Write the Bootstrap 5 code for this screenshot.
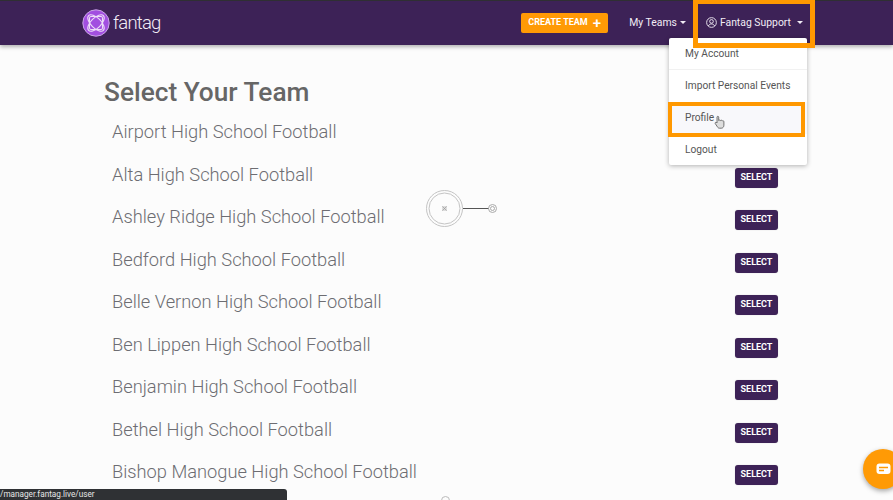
<!DOCTYPE html>
<html lang="en">
<head>
<meta charset="utf-8">
<title>Select Your Team</title>
<link href="https://cdn.jsdelivr.net/npm/bootstrap@5.3.0/dist/css/bootstrap.min.css" rel="stylesheet">
<style>
html,body{height:500px;overflow:hidden}
body{background:#fcfcfc;font-family:Roboto,"Liberation Sans",sans-serif;position:relative}
.topbar{height:45px;background:#3d2257;border-top:1px solid #2f2f33;box-shadow:0 2px 4px rgba(0,0,0,.3);padding:0 90px 0 82px;color:#fff}
.brandmark{font-size:18.5px;font-weight:300;color:#f1ecf5;gap:3px;letter-spacing:-.8px;line-height:1}
.btn-create{background:#ff9a05;border:0;color:#fff;font-size:9px;font-weight:700;height:20px;width:87px;padding:0;border-radius:2px;gap:5px}
.plus-mark{font-size:15px;line-height:1;font-weight:500}
.toplink{font-size:10.4px;color:#f1ecf5;gap:3px}
.gap-link{margin-left:21px;margin-right:20px}
.caret-down{border-top:3.5px solid #f1ecf5;border-left:3.5px solid transparent;border-right:3.5px solid transparent;display:inline-block}
.caret-spaced{margin-left:3px}
.teams-wrap{padding-left:104px;padding-top:32px;width:674px;box-sizing:content-box}
.page-title{font-size:26.25px;font-weight:500;color:#666;line-height:30px;margin:0 0 14px}
.team-row{height:42.5px;padding-left:8px}
.team-name{font-size:18.27px;font-weight:300;color:#6d6d72;line-height:24px;margin-top:-1px}
.btn-select{background:#3d2257;color:#fff;font-size:9px;font-weight:700;border:0;border-radius:3px;width:43px;height:20px;padding:0;margin-top:4px;box-shadow:0 0 1px rgba(0,0,0,.3)}
.menu-panel{position:absolute;left:669px;top:38px;width:138px;height:127px;background:#fff;border-radius:2px;box-shadow:0 1px 5px rgba(0,0,0,.3);font-size:10.2px;color:#555}
.menu-row{height:32px;padding-left:16px;display:flex;align-items:center}
.menu-row.first-row{border-bottom:1px solid #f1f1f1;height:31.5px;padding-top:1px}
.menu-row.active-row{background:#f8f8fb}
.hl-box{position:absolute;border:5px solid #ff9800}
.hl-account{left:693px;top:-1px;width:122px;height:49px}
.hl-profile{left:668px;top:102px;width:137px;height:35px;border-width:4px}
.cursor-hand{position:absolute;left:714px;top:115px}
.node-mark{position:absolute;left:426px;top:190px}
.node-stub{position:absolute;left:441px;top:496px;width:9px;height:9px;border:1px solid #bbb;border-radius:50%}
.status-tip{position:absolute;left:0;bottom:0;width:287px;height:11px;background:#2f3134;border-top-right-radius:3px;color:#e6e6e6;font-size:8.2px;line-height:11px;white-space:nowrap}
.chat-fab{position:absolute;left:863px;top:449px;width:40px;height:40px;border-radius:50%;background:#ff9a05;box-shadow:0 2px 5px rgba(0,0,0,.35);padding-left:13px}
</style>
</head>
<body>
<nav class="topbar d-flex align-items-center">
  <div class="brandmark d-flex align-items-center">
    <svg width="28" height="28" viewBox="0 0 28 28"><circle cx="14" cy="14" r="13.2" fill="#a24fe0" stroke="#c9a5e6" stroke-width="1"/><g fill="none" stroke="#ecdcf8" stroke-width="1.1"><ellipse cx="14" cy="14" rx="5" ry="10.5" transform="rotate(45 14 14)"/><ellipse cx="14" cy="14" rx="5" ry="10.5" transform="rotate(-45 14 14)"/><rect x="7.5" y="7.5" width="13" height="13" rx="1.5"/></g></svg>
    <span>fantag</span>
  </div>
  <div class="ms-auto d-flex align-items-center">
    <button class="btn-create d-flex align-items-center justify-content-center">CREATE TEAM <span class="plus-mark">+</span></button>
    <span class="toplink d-flex align-items-center gap-link">My Teams <span class="caret-down"></span></span>
    <span class="toplink d-flex align-items-center">
      <svg width="11" height="11" viewBox="0 0 12 12" fill="none" stroke="#f1ecf5" stroke-width="1"><circle cx="6" cy="6" r="5.3"/><circle cx="6" cy="4.8" r="2"/><path d="M2.6 9.8c.7-1.6 2-2.2 3.4-2.2s2.7.6 3.4 2.2"/></svg>
      Fantag Support <span class="caret-down caret-spaced"></span>
    </span>
  </div>
</nav>

<main class="teams-wrap">
  <h1 class="page-title">Select Your Team</h1>
  <div class="team-row d-flex justify-content-between"><span class="team-name">Airport High School Football</span><button class="btn-select">SELECT</button></div>
  <div class="team-row d-flex justify-content-between"><span class="team-name">Alta High School Football</span><button class="btn-select">SELECT</button></div>
  <div class="team-row d-flex justify-content-between"><span class="team-name">Ashley Ridge High School Football</span><button class="btn-select">SELECT</button></div>
  <div class="team-row d-flex justify-content-between"><span class="team-name">Bedford High School Football</span><button class="btn-select">SELECT</button></div>
  <div class="team-row d-flex justify-content-between"><span class="team-name">Belle Vernon High School Football</span><button class="btn-select">SELECT</button></div>
  <div class="team-row d-flex justify-content-between"><span class="team-name">Ben Lippen High School Football</span><button class="btn-select">SELECT</button></div>
  <div class="team-row d-flex justify-content-between"><span class="team-name">Benjamin High School Football</span><button class="btn-select">SELECT</button></div>
  <div class="team-row d-flex justify-content-between"><span class="team-name">Bethel High School Football</span><button class="btn-select">SELECT</button></div>
  <div class="team-row d-flex justify-content-between"><span class="team-name">Bishop Manogue High School Football</span><button class="btn-select">SELECT</button></div>
</main>

<div class="menu-panel">
  <div class="menu-row first-row">My Account</div>
  <div class="menu-row">Import Personal Events</div>
  <div class="menu-row active-row">Profile</div>
  <div class="menu-row">Logout</div>
</div>
<div class="hl-box hl-account"></div>
<div class="hl-box hl-profile"></div>

<svg class="cursor-hand" width="12" height="15" viewBox="0 0 12 15"><path d="M3 7V2.2c0-1.2 1.7-1.2 1.7 0V5.500c.3-.7 1.600-.7 1.800.1.400-.6 1.600-.5 1.800.3.500-.4 1.600-.2 1.600.8v3.500c0 1.600-1 3-2.600 3H5.500c-1 0-1.700-.6-2.200-1.500L1.200 8.500c-.5-1 .9-1.800 1.800-.5z" fill="#ddd" stroke="#555" stroke-width=".8"/></svg>

<svg class="node-mark" width="72" height="38" viewBox="0 0 72 38" fill="none">
  <circle cx="18.500" cy="18.500" r="18" stroke="#c4c4c4"/>
  <circle cx="18.500" cy="18.500" r="15.500" stroke="#c4c4c4"/>
  <rect x="16" y="16" width="5" height="5" fill="#ddd"/>
  <path d="M16.500 16.500l4 4m0-4l-4 4" stroke="#999" stroke-width=".7"/>
  <path d="M37 18.500H63" stroke="#555"/>
  <circle cx="66.500" cy="18.500" r="4" stroke="#aaa"/>
  <circle cx="66.500" cy="18.500" r="2" stroke="#aaa"/>
</svg>
<div class="node-stub"></div>

<div class="status-tip">/manager.fantag.live/user</div>
<div class="chat-fab d-flex align-items-center">
  <svg width="15" height="12" viewBox="0 0 15 12"><rect x=".5" y=".5" width="14" height="10.500" rx="3" fill="#fff"/><path d="M3 4.500h9M3 7.500h5" stroke="#ff9a05" stroke-width="1.300"/></svg>
</div>
<script src="https://cdn.jsdelivr.net/npm/bootstrap@5.3.0/dist/js/bootstrap.bundle.min.js"></script>
</body>
</html>
